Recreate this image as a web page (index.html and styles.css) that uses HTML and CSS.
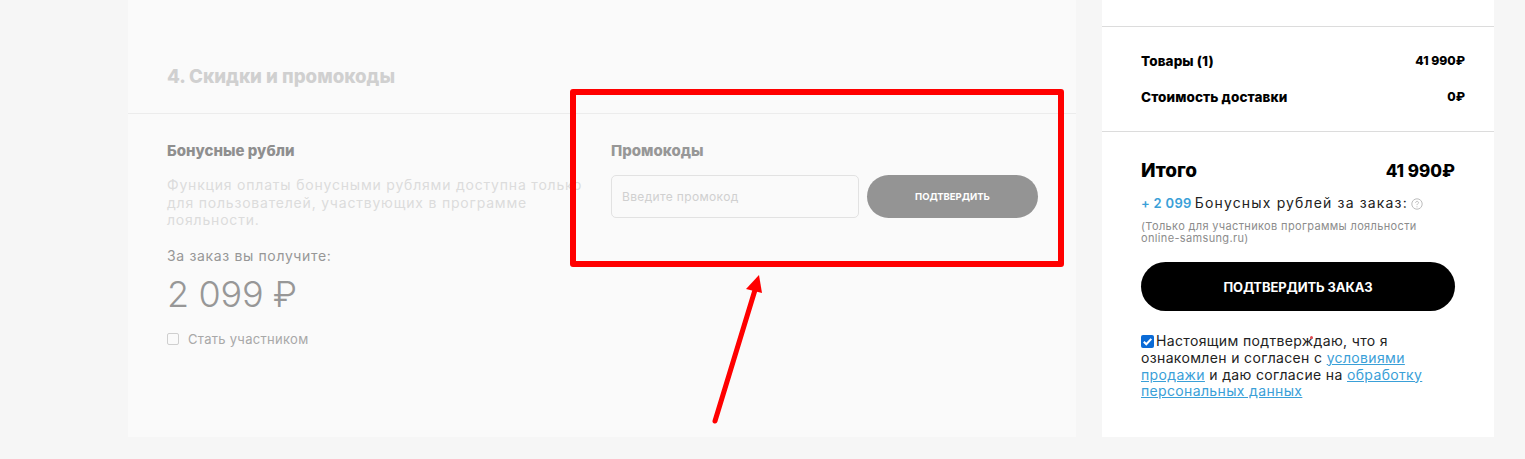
FILE: index.html
```html
<!DOCTYPE html>
<html lang="ru">
<head>
<meta charset="utf-8">
<title>Оформление заказа</title>
<link rel="stylesheet" href="styles.css">
</head>
<body>
<div class="page">
  <main class="main">
    <h2 class="section-title">4. Скидки и промокоды</h2>
    <div class="columns">
      <section class="bonus">
        <h3 class="sub-title">Бонусные рубли</h3>
        <p class="bonus-note">Функция оплаты бонусными рублями доступна только для пользователей, участвующих в программе лояльности.</p>
        <p class="bonus-label">За заказ вы получите:</p>
        <p class="bonus-value">2 099 ₽</p>
        <label class="join"><span class="join-box"></span>Стать участником</label>
      </section>
      <section class="promo">
        <h3 class="sub-title promo-title">Промокоды</h3>
        <div class="promo-row">
          <div class="promo-input">Введите промокод</div>
          <button class="promo-btn">ПОДТВЕРДИТЬ</button>
        </div>
      </section>
    </div>
  </main>
  <aside class="side">
    <div class="rows">
      <div class="row"><span class="row-label">Товары (1)</span><span class="row-value">41 990₽</span></div>
      <div class="row"><span class="row-label">Стоимость доставки</span><span class="row-value">0₽</span></div>
    </div>
    <div class="summary">
      <div class="total"><span class="total-label">Итого</span><span class="total-value">41 990₽</span></div>
      <p class="earn"><span class="earn-num">+ 2 099</span> Бонусных рублей за заказ: <svg class="help" viewBox="0 0 12 12" width="12" height="12"><circle cx="6" cy="6" r="5.2" fill="none" stroke="#bdbdbd"/><path d="M4.6 4.8c0-1.9 2.9-1.9 2.9-.1 0 1.1-1.500 1.100-1.500 2.400" fill="none" stroke="#bdbdbd"/><circle cx="6" cy="8.800" r=".6" fill="#bdbdbd"/></svg></p>
      <p class="earn-note">(Только для участников программы лояльности online-samsung.ru)</p>
      <button class="confirm">ПОДТВЕРДИТЬ ЗАКАЗ</button>
      <p class="agree"><svg class="check" viewBox="0 0 13 13" width="13" height="13"><rect width="13" height="13" rx="2" fill="#0b6bd6"/><path d="M2.800 6.800l2.500 2.500 5-5.400" fill="none" stroke="#fff" stroke-width="2"/></svg><span class="agree-text">Настоящим подтверждаю, что я ознакомлен и согласен с <a href="#">условиями продажи</a> и даю согласие на <a href="#">обработку персональных данных</a></span></p>
    </div>
  </aside>
</div>
<div class="mark-box"></div>
<span class="mark-speck"></span>
<svg class="mark-arrow" viewBox="0 0 70 170" width="70" height="170">
  <path d="M12 156L52 25" stroke="#f00" stroke-width="5" stroke-linecap="round" fill="none"/>
  <path d="M56 10L59 28L43 24Z" fill="#f00"/>
</svg>
</body>
</html>
```
FILE: styles.css
```css
* { box-sizing: border-box; }
html, body { margin: 0; height: 459px; overflow: hidden; }
body {
  position: relative;
  background: #f6f6f6;
  font-family: "Inter", "Noto Sans", sans-serif;
  color: #000;
}
p, h2, h3 { margin: 0; }
.page { display: flex; gap: 26px; padding-left: 128px; height: 437px; }
.main { width: 948px; height: 437px; background: #fafafa; padding-top: 66px; }
.section-title {
  height: 48px;
  padding-left: 39px;
  font-size: 18.700px;
  line-height: 22px;
  font-weight: 800;
  color: #d0d0d0;
  border-bottom: 1px solid #ececec;
}
.columns { display: flex; padding: 28px 0 0 39px; }
.bonus { width: 444px; }
.sub-title { font-size: 15px; line-height: 18px; font-weight: 800; color: #8f8f8f; }
.promo-title { color: #979797; }
.bonus-note {
  margin-top: 16px;
  width: 420px;
  font-size: 14px;
  line-height: 17.500px;
  letter-spacing: .8px;
  color: #dcdcdc;
}
.bonus-label { margin-top: 18px; font-size: 14px; line-height: 18px; color: #979797; letter-spacing: .65px; }
.bonus-value { margin-top: 7px; font-size: 36px; line-height: 44px; font-weight: 300; color: #979797; letter-spacing: -.3px; }
.join { display: flex; align-items: center; gap: 9px; margin-top: 15px; font-size: 13px; line-height: 16px; color: #a8a8a8; letter-spacing: .3px; }
.join-box { width: 12px; height: 12px; border: 1px solid #cfcfcf; border-radius: 2px; background: #fafafa; }
.promo { width: 427px; }
.promo-row { display: flex; gap: 8px; margin-top: 15px; }
.promo-input {
  width: 248px; height: 43px;
  padding-left: 10px;
  border: 1px solid #e2e2e2;
  border-radius: 5px;
  font-size: 12px; line-height: 42px;
  color: #d0d0d0;
  letter-spacing: .35px;
}
.promo-btn {
  width: 171px; height: 43px;
  border: 0; border-radius: 22px;
  background: #949494;
  color: #fff;
  font: 700 9.500px "Inter", sans-serif;
}
.side { width: 392px; height: 437px; background: #fff; padding-top: 26px; }
.rows { height: 106px; border-top: 1px solid #dcdcdc; border-bottom: 1px solid #dcdcdc; padding: 25px 29px 0 39px; }
.row { display: flex; justify-content: space-between; height: 36px; line-height: 18px; font-weight: 800; }
.row-label { font-size: 13.500px; letter-spacing: .1px; }
.row-value { font-size: 12.200px; }
.summary { padding: 27px 39px 0; }
.total { display: flex; justify-content: space-between; line-height: 24px; font-weight: 800; }
.total-label { font-size: 19px; }
.total-value { font-size: 17px; }
.earn { margin-top: 11px; font-size: 14px; line-height: 18px; color: #222; letter-spacing: 1.150px; white-space: nowrap; }
.earn-num { margin-right: -2px; color: #3aa0d8; font-size: 13px; letter-spacing: .3px; font-weight: 600; }
.help { vertical-align: -2px; margin-left: -2px; }
.earn-note { margin-top: 8px; width: 290px; font-size: 11px; line-height: 12px; color: #8c8c8c; letter-spacing: .35px; }
.confirm {
  display: block;
  width: 314px; height: 49px;
  margin-top: 18px;
  border: 0; border-radius: 25px;
  background: #000; color: #fff;
  font: 700 13px "Inter", sans-serif;
  letter-spacing: -.1px;
}
.agree { margin-top: 22px; font-size: 14px; line-height: 16.800px; color: #222; letter-spacing: .35px; }
.agree a { color: #3aa0d8; }
.check { vertical-align: -2px; margin-right: 2px; }
.mark-box {
  position: absolute;
  left: 570px; top: 89px;
  width: 494px; height: 178px;
  border: 6px solid #f00;
  border-radius: 3px;
}
.mark-speck { position: absolute; left: 1310px; top: 336px; width: 3px; height: 3px; border-radius: 50%; background: #e0474f; }
.mark-arrow { position: absolute; left: 703px; top: 265px; }
```
